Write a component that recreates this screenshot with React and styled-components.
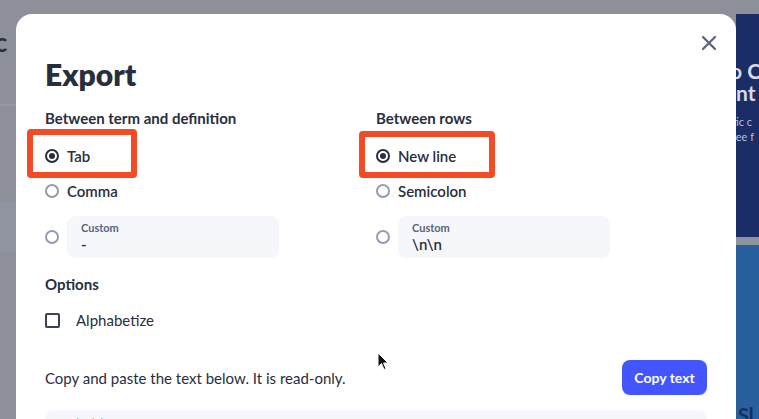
import React from "react";
import styled, { createGlobalStyle, css } from "styled-components";

const GlobalStyle = createGlobalStyle`
  html, body { margin: 0; padding: 0; }
  body {
    width: 759px;
    height: 419px;
    overflow: hidden;
    font-family: "Lato", "Liberation Sans", sans-serif;
    color: #282e3e;
  }
`;

const Page = styled.div`
  position: relative;
  display: flex;
  height: 419px;
  padding-top: 14px;
  box-sizing: border-box;
  background: #8e9099;
  overflow: hidden;
`;

const LeftStrip = styled.div`
  width: 16px;
  flex: none;
  display: flex;
  flex-direction: column;
  overflow: hidden;
`;

const BehindTitle = styled.div`
  margin-top: 12px;
  margin-left: -20px;
  font-size: 26px;
  font-weight: 700;
  color: #2b2f3c;
  white-space: nowrap;
`;

const BehindBand = styled.div`
  margin-top: ${(p) => p.top}px;
  height: ${(p) => p.h}px;
  background: ${(p) => p.bg};
`;

const RightStrip = styled.div`
  width: 23px;
  flex: none;
  display: flex;
  flex-direction: column;
  overflow: hidden;
`;

const NavyPanel = styled.div`
  height: 223px;
  background: #1b2d66;
  padding-top: 46px;
  box-sizing: border-box;
  color: #d9dcec;
  white-space: nowrap;
`;

const NavyBig = styled.div`
  font-size: 21px;
  font-weight: 700;
  line-height: 22px;
  margin-left: -6px;
`;

const NavySmall = styled.div`
  font-size: 11px;
  line-height: 15px;
  margin-left: -4px;
  color: #b9bfd9;
  ${(p) =>
    p.first &&
    css`
      margin-top: 10px;
    `}
`;

const GapBar = styled.div`
  height: 8px;
  background: #8f939b;
`;

const BluePanel = styled.div`
  flex: 1;
  background: #28609d;
  display: flex;
  flex-direction: column;
  justify-content: flex-end;
`;

const BlueText = styled.div`
  font-size: 20px;
  font-weight: 700;
  color: #16305c;
  margin: 0 0 -8px 2px;
`;

const Modal = styled.div`
  position: relative;
  width: 720px;
  flex: none;
  background: #fff;
  border-radius: 16px 16px 0 0;
  padding: 42px 29px 0;
  box-sizing: border-box;
`;

const CloseButton = styled.button`
  position: absolute;
  top: 20px;
  right: 18px;
  width: 18px;
  height: 18px;
  padding: 0;
  border: 0;
  background: none;
  display: flex;
  align-items: center;
  justify-content: center;
`;

const Title = styled.h1`
  margin: 0;
  font-size: 30px;
  line-height: 36px;
  font-weight: 800;
  color: #282e3e;
`;

const Columns = styled.div`
  display: grid;
  grid-template-columns: 331px 331px;
  margin-top: 16px;
`;

const Column = styled.div`
  display: flex;
  flex-direction: column;
`;

const Label = styled.div`
  font-size: 15px;
  line-height: 20px;
  font-weight: 700;
  color: #282e3e;
`;

const RadioList = styled.div`
  display: flex;
  flex-direction: column;
  margin-top: 10px;
`;

const RadioRow = styled.label`
  position: relative;
  display: flex;
  align-items: center;
  gap: 8px;
  height: 35px;
  font-size: 15px;
  font-weight: 600;
  color: #282e3e;
  ${(p) =>
    p.custom &&
    css`
      height: 42px;
      margin-top: 8px;
    `}
`;

const Radio = styled.span`
  width: 14px;
  height: 14px;
  flex: none;
  box-sizing: border-box;
  border-radius: 50%;
  border: 2px solid ${(p) => (p.checked ? "#282e3e" : "#939bb4")};
  display: flex;
  align-items: center;
  justify-content: center;
  &::after {
    content: "";
    width: 6px;
    height: 6px;
    border-radius: 50%;
    background: ${(p) => (p.checked ? "#282e3e" : "transparent")};
  }
`;

const Highlight = styled.span`
  position: absolute;
  left: ${(p) => p.l}px;
  top: ${(p) => p.t}px;
  width: ${(p) => p.w}px;
  height: ${(p) => p.h}px;
  box-sizing: border-box;
  border: 6px solid #f24b25;
  border-radius: 4px;
  pointer-events: none;
`;

const CustomBox = styled.div`
  width: 212px;
  height: 42px;
  box-sizing: border-box;
  padding: 5px 14px 0;
  background: #f6f7fb;
  border-radius: 8px;
  display: flex;
  flex-direction: column;
`;

const CustomLabel = styled.span`
  font-size: 11px;
  line-height: 13px;
  font-weight: 700;
  color: #586380;
`;

const CustomValue = styled.span`
  font-size: 15px;
  line-height: 20px;
  font-weight: 600;
  color: #282e3e;
`;

const Section = styled.div`
  margin-top: 16px;
`;

const CheckRow = styled.label`
  display: flex;
  align-items: center;
  gap: 16px;
  height: 24px;
  margin-top: 14px;
  font-size: 15px;
  color: #282e3e;
`;

const Checkbox = styled.span`
  width: 15px;
  height: 15px;
  box-sizing: border-box;
  border: 2px solid #3c4255;
  border-radius: 2px;
`;

const Footer = styled.div`
  display: flex;
  align-items: center;
  justify-content: space-between;
  margin-top: 28px;
`;

const Hint = styled.p`
  margin: 0;
  font-size: 15px;
  color: #282e3e;
`;

const PrimaryButton = styled.button`
  width: 85px;
  height: 35px;
  border: 0;
  border-radius: 8px;
  background: #4255ff;
  color: #fff;
  font-family: inherit;
  font-size: 14px;
  font-weight: 700;
`;

const Output = styled.div`
  margin-top: 15px;
  height: 60px;
  border-radius: 8px;
  background: #f6f7fb;
  padding: 6px 20px;
  box-sizing: border-box;
  font-size: 11px;
  color: #9aa0b3;
`;

const Cursor = styled.svg`
  position: absolute;
  left: 377px;
  top: 352px;
`;

const CloseIcon = () => (
  <svg width="16" height="16" viewBox="0 0 16 16">
    <path d="M2 2 L14 14 M14 2 L2 14" stroke="#586380" strokeWidth="2.2" strokeLinecap="round" />
  </svg>
);

function RadioOption({ checked, children, highlight }) {
  return (
    <RadioRow>
      {highlight && <Highlight {...highlight} />}
      <Radio checked={checked} />
      {children}
    </RadioRow>
  );
}

function CustomOption({ value }) {
  return (
    <RadioRow custom>
      <Radio />
      <CustomBox>
        <CustomLabel>Custom</CustomLabel>
        <CustomValue>{value}</CustomValue>
      </CustomBox>
    </RadioRow>
  );
}

export default function App() {
  return (
    <>
      <GlobalStyle />
      <Page>
        <LeftStrip>
          <BehindTitle>nc</BehindTitle>
          <BehindBand top={46} h={2} bg="#979aa3" />
          <BehindBand top={96} h={50} bg="#9093a0" />
        </LeftStrip>

        <Modal>
          <CloseButton aria-label="Close">
            <CloseIcon />
          </CloseButton>
          <Title>Export</Title>

          <Columns>
            <Column>
              <Label>Between term and definition</Label>
              <RadioList>
                <RadioOption checked highlight={{ l: -18, t: -9, w: 110, h: 49 }}>
                  Tab
                </RadioOption>
                <RadioOption>Comma</RadioOption>
                <CustomOption value="-" />
              </RadioList>
            </Column>
            <Column>
              <Label>Between rows</Label>
              <RadioList>
                <RadioOption checked highlight={{ l: -17, t: -7, w: 136, h: 47 }}>
                  New line
                </RadioOption>
                <RadioOption>Semicolon</RadioOption>
                <CustomOption value="\n\n" />
              </RadioList>
            </Column>
          </Columns>

          <Section>
            <Label>Options</Label>
            <CheckRow>
              <Checkbox />
              Alphabetize
            </CheckRow>
          </Section>

          <Footer>
            <Hint>Copy and paste the text below. It is read-only.</Hint>
            <PrimaryButton>Copy text</PrimaryButton>
          </Footer>

          <Output>Schedule	...</Output>
        </Modal>

        <RightStrip>
          <NavyPanel>
            <NavyBig>o C</NavyBig>
            <NavyBig>Int</NavyBig>
            <NavySmall first>tic c</NavySmall>
            <NavySmall>ree f</NavySmall>
          </NavyPanel>
          <GapBar />
          <BluePanel>
            <BlueText>Sl</BlueText>
          </BluePanel>
        </RightStrip>

        <Cursor width="12" height="19" viewBox="0 0 12 19">
          <path d="M1 1 L1 15 L4.5 11.5 L7 17.5 L9 16.6 L6.6 11 L11 11 Z" fill="#111" stroke="#fff" strokeWidth="1" />
        </Cursor>
      </Page>
    </>
  );
}
